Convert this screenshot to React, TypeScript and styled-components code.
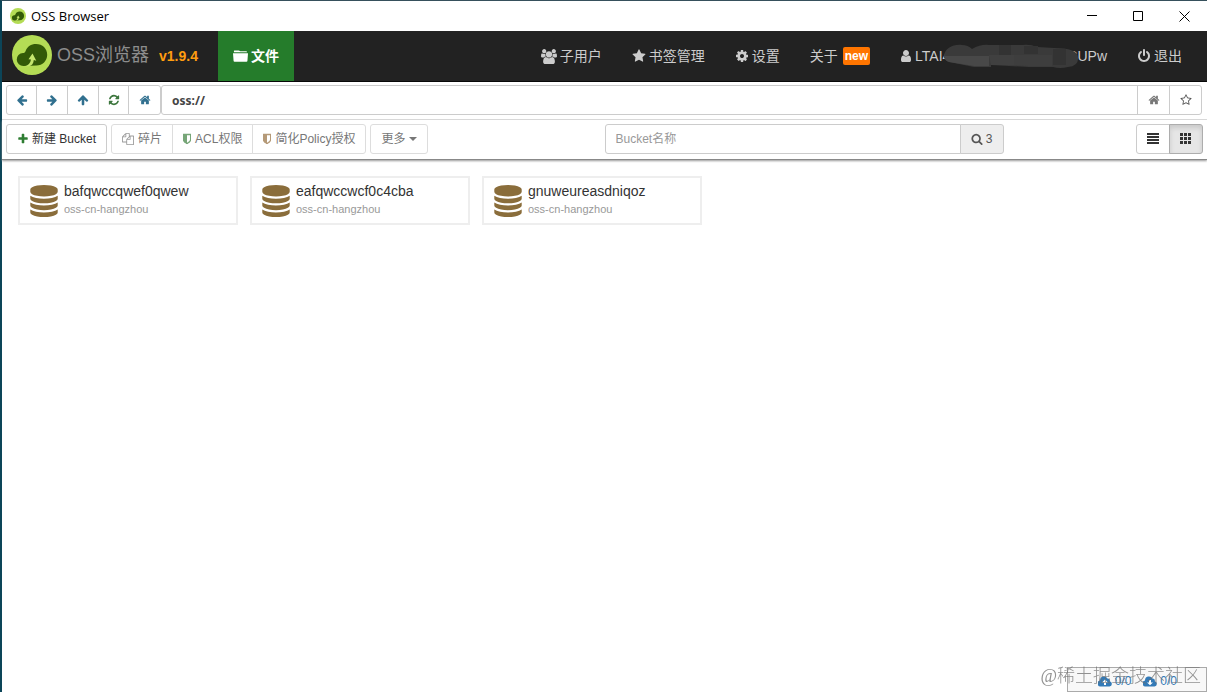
import React from "react";
import styled, { createGlobalStyle } from "styled-components";

const sans = '"Liberation Sans", "Noto Sans CJK SC", sans-serif';

const GlobalStyle = createGlobalStyle`
  * { box-sizing: border-box; }
  body {
    margin: 0;
    background: #fff;
    color: #333;
    font: 14px/20px ${sans};
  }
  a { color: inherit; text-decoration: none; }
  button, input { font-family: inherit; margin: 0; }
`;

/* ---------- icons ---------- */

const PATHS = {
  left: "M1664 896v128q0 53-32.5 90.5t-84.5 37.5h-704l293 294q38 36 38 90t-38 90l-75 76q-37 37-90 37-52 0-91-37l-651-652q-37-37-37-90 0-52 37-91l651-650q38-38 91-38 52 0 90 38l75 74q38 38 38 91t-38 91l-293 293h704q52 0 84.5 37.5t32.5 90.5z",
  right: "M1600 960q0 54-37 91l-651 651q-39 37-91 37-51 0-90-37l-75-75q-38-38-38-91t38-91l293-293h-704q-52 0-84.5-37.5t-32.5-90.5v-128q0-53 32.5-90.5t84.5-37.5h704l-293-294q-38-36-38-90t38-90l75-75q38-38 90-38 53 0 91 38l651 651q37 35 37 90z",
  up: "M1675 971q0 51-37 90l-75 75q-38 38-91 38-54 0-90-38l-294-293v704q0 52-37.5 84.5t-90.5 32.5h-128q-53 0-90.5-32.5t-37.5-84.5v-704l-294 293q-36 38-90 38t-90-38l-75-75q-38-38-38-90 0-53 38-91l651-651q35-37 90-37 54 0 91 37l651 651q37 39 37 91z",
  refresh: "M1639 1056q0 5-1 7-64 268-268 434.5t-478 166.5q-146 0-282.5-55t-243.5-157l-129 129q-19 19-45 19t-45-19-19-45v-448q0-26 19-45t45-19h448q26 0 45 19t19 45-19 45l-137 137q71 66 161 102t187 36q134 0 250-65t186-179q11-17 53-117 8-23 30-23h192q13 0 22.5 9.5t9.5 22.5zm25-800v448q0 26-19 45t-45 19h-448q-26 0-45-19t-19-45 19-45l138-138q-148-137-349-137-134 0-250 65t-186 179q-11 17-53 117-8 23-30 23h-199q-13 0-22.5-9.5t-9.5-22.5v-7q65-268 270-434.5t480-166.5q146 0 284 55.5t245 156.5l130-129q19-19 45-19t45 19 19 45z",
  home: "M1472 992v480q0 26-19 45t-45 19h-384v-384h-256v384h-384q-26 0-45-19t-19-45v-480q0-1 .5-3t.5-3l575-474 575 474q1 2 1 6zm223-69l-62 74q-8 9-21 11h-3q-13 0-21-7l-692-577-692 577q-12 8-24 7-13-2-21-11l-62-74q-8-10-7-23.5t11-21.5l719-599q32-26 76-26t76 26l244 204v-195q0-14 9-23t23-9h192q14 0 23 9t9 23v408l219 182q10 8 11 21.5t-7 23.5z",
  plus: "M1600 736v192q0 40-28 68t-68 28h-416v416q0 40-28 68t-68 28h-192q-40 0-68-28t-28-68v-416h-416q-40 0-68-28t-28-68v-192q0-40 28-68t68-28h416v-416q0-40 28-68t68-28h192q40 0 68 28t28 68v416h416q40 0 68 28t28 68z",
  star: "M1728 647q0 22-26 48l-363 354 86 500q1 7 1 20 0 21-10.5 35.5t-30.5 14.5q-19 0-40-12l-449-236-449 236q-22 12-40 12-21 0-31.5-14.5t-10.5-35.5q0-6 2-20l86-500-364-354q-25-27-25-48 0-37 56-46l502-73 225-455q19-41 49-41t49 41l225 455 502 73q56 9 56 46z",
  starO: "M1201 1004l306-297-422-62-189-382-189 382-422 62 306 297-73 421 378-199 377 199zm527-357q0 22-26 48l-363 354 86 500q1 7 1 20 0 50-41 50-19 0-40-12l-449-236-449 236q-22 12-40 12-21 0-31.5-14.5t-10.5-35.5q0-6 2-20l86-500-364-354q-25-27-25-48 0-37 56-46l502-73 225-455q19-41 49-41t49 41l225 455 502 73q56 9 56 46z",
  cog: "M1152 896q0-106-75-181t-181-75-181 75-75 181 75 181 181 75 181-75 75-181zm512-109v222q0 12-8 23t-20 13l-185 28q-19 54-39 91 35 50 107 138 10 12 10 25t-9 23q-27 37-99 108t-94 71q-12 0-26-9l-138-108q-44 23-91 38-16 136-29 186-7 28-36 28h-222q-14 0-24.5-8.5t-11.5-21.5l-28-184q-49-16-90-37l-141 107q-10 9-25 9-14 0-25-11-126-114-165-168-7-10-7-23 0-12 8-23 15-21 51-66.5t54-70.5q-27-50-41-99l-183-27q-13-2-21-12.5t-8-23.5v-222q0-12 8-23t19-13l186-28q14-46 39-92-40-57-107-138-10-12-10-24 0-10 9-23 26-36 98.5-107.5t94.5-71.5q13 0 26 10l138 107q44-23 91-38 16-136 29-186 7-28 36-28h222q14 0 24.5 8.5t11.5 21.5l28 184q49 16 90 37l142-107q9-9 24-9 13 0 25 10 129 119 165 170 7 8 7 22 0 12-8 23-15 21-51 66.5t-54 70.5q26 50 41 98l183 28q13 2 21 12.5t8 23.5z",
  user: "M1536 1399q0 109-62.5 187t-150.5 78h-854q-88 0-150.5-78t-62.5-187q0-85 8.5-160.5t31.5-152 58.5-131 94-89 134.5-34.5q131 128 313 128t313-128q76 0 134.500 34.500t94 89 58.500 131 31.500 152 8.500 160.500zm-256-887q0 159-112.500 271.500t-271.500 112.500-271.500-112.500-112.500-271.500 112.500-271.500 271.500-112.500 271.500 112.500 112.500 271.500z",
  power: "M1664 896q0 156-61 298t-164 245-245 164-298 61-298-61-245-164-164-245-61-298q0-182 80.5-343t226.5-270q43-32 95.5-25t83.5 50q32 42 24.5 94.5t-49.5 84.5q-98 74-151.5 181t-53.5 228q0 104 40.5 198.5t109.5 163.5 163.5 109.5 198.5 40.5 198.5-40.5 163.5-109.5 109.5-163.5 40.5-198.5q0-121-53.5-228t-151.5-181q-42-32-49.5-84.5t24.5-94.5q31-43 84-50t95 25q146 109 226.5 270t80.5 343zm-640-768v640q0 52-38 90t-90 38-90-38-38-90v-640q0-52 38-90t90-38 90 38 38 90z",
  search: "M1216 832q0-185-131.5-316.5t-316.5-131.5-316.5 131.5-131.5 316.5 131.5 316.5 316.5 131.5 316.5-131.5 131.5-316.5zm512 832q0 52-38 90t-90 38q-54 0-90-38l-343-342q-179 124-399 124-143 0-273.5-55.5t-225-150-150-225-55.5-273.5 55.5-273.5 150-225 225-150 273.5-55.5 273.5 55.5 225 150 150 225 55.5 273.5q0 220-124 399l343 343q37 37 37 90z",
  shield: "M1344 960v-640h-448v1137q119-63 213-137 235-184 235-360zm192-768v768q0 86-33.5 170.5t-83 150-118 127.5-126.5 103-121 77.5-89.5 49.5-42.5 20q-12 6-26 6t-26-6q-16-7-42.5-20t-89.5-49.5-121-77.5-126.5-103-118-127.5-83-150-33.5-170.5v-768q0-26 19-45t45-19h1152q26 0 45 19t19 45z",
  files: "M1696 384q40 0 68 28t28 68v1216q0 40-28 68t-68 28h-960q-40 0-68-28t-28-68v-288h-544q-40 0-68-28t-28-68v-672q0-40 20-88t48-76l408-408q28-28 76-48t88-20h416q40 0 68 28t28 68v328q68-40 128-40h416zm-544 213l-299 299h299v-299zm-640-384l-299 299h299v-299zm196 647l316-316v-416h-384v416q0 40-28 68t-68 28h-416v640h512v-256q0-40 20-88t48-76zm956 804v-1152h-384v416q0 40-28 68t-68 28h-416v640h896z",
  users: "M593 896q-162 5-265 128h-134q-82 0-138-40.5t-56-118.5q0-353 124-353 6 0 43.5 21t97.5 42.5 119 21.5q67 0 133-23-5 37-5 66 0 139 81 256zm1071 637q0 120-73 189.5t-194 69.5h-874q-121 0-194-69.5t-73-189.5q0-53 3.5-103.5t14-109 26.5-108.5 43-97.5 62-81 85.5-53.5 111.5-20q10 0 43 21.5t73 48 107 48 135 21.5 135-21.5 107-48 73-48 43-21.5q61 0 111.5 20t85.5 53.5 62 81 43 97.5 26.5 108.5 14 109 3.5 103.5zm-1024-1277q0 106-75 181t-181 75-181-75-75-181 75-181 181-75 181 75 75 181zm704 384q0 159-112.5 271.5t-271.5 112.5-271.5-112.5-112.5-271.5 112.5-271.5 271.5-112.5 271.5 112.5 112.5 271.5zm576 225q0 78-56 118.5t-138 40.5h-134q-103-123-265-128 81-117 81-256 0-29-5-66 66 23 133 23 59 0 119-21.5t97.5-42.5 43.5-21q124 0 124 353zm-128-609q0 106-75 181t-181 75-181-75-75-181 75-181 181-75 181 75 75 181z",
  database: "M896 768q237 0 443-43t325-127v170q0 69-103 128t-280 93.5-385 34.5-385-34.5-280-93.5-103-128v-170q119 84 325 127t443 43zm0 768q237 0 443-43t325-127v170q0 69-103 128t-280 93.5-385 34.5-385-34.5-280-93.5-103-128v-170q119 84 325 127t443 43zm0-384q237 0 443-43t325-127v170q0 69-103 128t-280 93.5-385 34.5-385-34.5-280-93.5-103-128v-170q119 84 325 127t443 43zm0-1152q208 0 385 34.5t280 93.5 103 128v128q0 69-103 128t-280 93.5-385 34.5-385-34.5-280-93.5-103-128v-128q0-69 103-128t280-93.5 385-34.5z",
};

const Svg = styled.svg`
  display: block;
  flex: none;
`;

function Icon({ name, size = 12, color = "currentColor", trim = 0 }: {
  name: keyof typeof PATHS; size?: number; color?: string; trim?: number;
}) {
  const full = name === "users" ? 1920 : 1792;
  const inset = (trim * 1792) / size;
  return (
    <Svg
      width={Math.round((size * full) / 1792) - trim * 2}
      height={size}
      viewBox={`${inset} 0 ${full - inset * 2} 1792`}
      fill={color}
      aria-hidden="true"
    >
      <path d={PATHS[name]} />
    </Svg>
  );
}

const Logo = ({ size }: { size: number }) => (
  <Svg width={size} height={size} viewBox="0 0 40 40" aria-hidden="true">
    <circle cx="20" cy="20" r="20" fill="#b4dc55" />
    <path d="M11.500 31a6.500 6.500 0 0 1-.5-13c1.300 0 2.200-.9 2.700-2.300C15.300 11.700 19 9 24 9c6.500 0 11.200 4.700 11.200 10.800S30.500 30.500 24.500 30.500z" fill="#335a08" />
    <path d="M20.500 18.500l3.800 7.200-2.500-.8c-.2 3.200-1.900 5.700-4.800 6.400h-4.500c3.700-.7 6-3.300 6.500-6.800l-2.500-.3z" fill="#c5e66e" />
  </Svg>
);

const FolderIcon = () => (
  <Svg width="15" height="14" viewBox="0 0 16 14" fill="#fff" aria-hidden="true">
    <path d="M1 3V1.500Q1 1 1.500 1H6q1 0 1.300.7L7.700 2H14q1 0 1 1zM0 4h16l-.6 8q-.1 1-1 1H1.600q-.9 0-1-1z" />
  </Svg>
);

const CloudIcon = ({ down }: { down?: boolean }) => (
  <Svg width="14" height="12" viewBox="0 0 14 12" aria-hidden="true">
    <path d="M3.200 11.500A3 3 0 0 1 2 5.500 4 4 0 0 1 9.500 3.500a2.300 2.300 0 0 1 2.300 2.700A2.700 2.700 0 0 1 11.500 11.500z" fill="#337ab7" />
    <path d={down ? "M6 5h2v2.500h2L7 10.300 4 7.500h2z" : "M7 4.500l3 3H8V10H6V7.500H4z"} fill="#fff" />
  </Svg>
);

/* ---------- window frame ---------- */

const Window = styled.div`
  min-height: 100vh;
  display: flex;
  flex-direction: column;
  border-top: 1px solid #36505c;
  border-left: 2px solid #0c4558;
`;

const TitleBar = styled.header`
  display: flex;
  align-items: center;
  height: 30px;
  padding-left: 8px;
  gap: 5px;
  font: 13px/16px "Open Sans", "Noto Sans CJK SC", sans-serif;
  color: #000;
`;

const WindowControls = styled.div`
  display: flex;
  margin-left: auto;
`;

const WindowButton = styled.button`
  width: 46px;
  height: 30px;
  padding: 0;
  border: 0;
  background: none;
  display: grid;
  place-items: center;
`;

/* ---------- main navigation ---------- */

const NavBar = styled.nav`
  display: flex;
  align-items: flex-start;
  height: 51px;
  padding: 0 10px;
  background: #222;
  color: #ccc;
  border-bottom: 1px solid #080808;
  white-space: nowrap;
`;

const Brand = styled.a`
  display: flex;
  align-items: center;
  gap: 5px;
  height: 48px;
  color: #8d8d8d;
  font-size: 18px;
`;

const Version = styled.span`
  margin: 0 20px 0 10px;
  line-height: 50px;
  font-weight: bold;
  color: #ff9d10;
`;

const NavLink = styled.a<{ $active?: boolean; $gap?: number }>`
  display: flex;
  align-items: center;
  gap: ${(p) => p.$gap ?? 3}px;
  height: 50px;
  padding: 0 15px;
  ${(p) => p.$active && "background: #257c2b; color: #fff; font-weight: bold;"}
`;

const NavRight = styled.div`
  display: flex;
  margin-left: auto;
`;

const NewBadge = styled.span`
  padding: 0 2px;
  border-radius: 2px;
  background: #ff7500;
  color: #fff;
  font-size: 12px;
  line-height: 18px;
  font-weight: bold;
`;

const Account = styled.span`
  display: flex;
  align-items: center;
`;

const Smudge = styled(Svg)`
  position: relative;
  margin: 0 -14px 0 -9px;
`;

const AccountMask = () => (
  <Smudge width="140" height="26" viewBox="0 0 140 26" aria-hidden="true">
    <path d="M3 13C4 5 12 1 21 2q6 0 10 4 9-5 17-4h33q8-1 15 2l17 1q23 0 24 9t-10 10q-8 2-15 0H88l-38-2v2H33L8 19q-5-2-5-6z" fill="#3a3a3a" />
    <path d="M3 13h45v10H33L8 19q-5-2-5-6z" fill="#484848" />
    <path d="M48 12h25v10H50z" fill="#404040" />
    <path d="M58 2h12v10H58zM83 3h14v8H83zM112 6h13v16h-13z" fill="#333" />
    <path d="M73 12h38v11H88l-15-1z" fill="#3e3e3e" />
  </Smudge>
);

/* ---------- toolbars ---------- */

const AddressBar = styled.div`
  display: flex;
  padding: 3px 5px 4px 4px;
  border-bottom: 1px solid #ddd;
`;

const Group = styled.div`
  display: flex;
  > * + * { margin-left: -1px; }
  > :not(:first-child) { border-top-left-radius: 0; border-bottom-left-radius: 0; }
  > :not(:last-child) { border-top-right-radius: 0; border-bottom-right-radius: 0; }
`;

const Button = styled.button<{ $width?: number; $muted?: boolean; $active?: boolean }>`
  display: flex;
  align-items: center;
  justify-content: center;
  gap: ${(p) => (p.$muted ? 4 : 3)}px;
  flex: none;
  height: 30px;
  ${(p) => p.$width && `width: ${p.$width}px;`}
  padding: 0 ${(p) => (p.$width ? 0 : 10)}px;
  border: 1px solid ${(p) => (p.$active ? "#adadad" : p.$muted ? "#ddd" : "#ccc")};
  border-radius: 3px;
  background: ${(p) => (p.$active ? "#e6e6e6" : "#fff")};
  ${(p) => p.$active && "box-shadow: inset 0 3px 5px rgba(0, 0, 0, 0.125);"}
  color: ${(p) => (p.$muted ? "#777" : "#333")};
  font-size: 12px;
  line-height: 18px;
  white-space: nowrap;
`;

const Field = styled.input<{ $address?: boolean }>`
  flex: 1;
  min-width: 0;
  height: 30px;
  padding: 0 10px;
  border: 1px solid #ccc;
  border-radius: 3px;
  background: #fff;
  color: #444;
  font-size: 12px;
  outline: 0;
  ${(p) => p.$address && 'font: bold 12px/18px "Noto Sans", "Noto Sans CJK SC", sans-serif;'}
  &::placeholder { color: #999; opacity: 1; }
`;

const AddressGroup = styled(Group)`
  flex: 1;
`;

const ActionBar = styled.div`
  display: flex;
  padding: 4px 0 5px;
  border-bottom: 1px solid #888;
  box-shadow: 0 1px 2px #999;
`;

const Half = styled.div`
  flex: 1 1 50%;
  display: flex;
  gap: 4px;
  &:first-child { padding-left: 4px; }
  &:last-child { padding-right: 4px; justify-content: space-between; }
`;

const SearchGroup = styled(Group)`
  flex: 0 1 399px;
`;

const SearchButton = styled(Button)`
  background: #eee;
  color: #555;
`;

const Caret = styled.i`
  border: 4px solid transparent;
  border-top-color: #777;
  border-bottom: 0;
`;

/* ---------- bucket list ---------- */

const Buckets = styled.main`
  display: flex;
  flex-wrap: wrap;
  gap: 12px;
  padding: 16px;
`;

const BucketCard = styled.a`
  display: flex;
  align-items: center;
  gap: 4px;
  width: 220px;
  height: 49px;
  padding-left: 8px;
  border: 2px solid #eee;
`;

const BucketText = styled.div`
  display: flex;
  flex-direction: column;
  margin-top: -3px;
`;

const Region = styled.small`
  font-size: 11px;
  line-height: 16px;
  color: #999;
`;

/* ---------- transfer status ---------- */

const TransferBox = styled.aside`
  position: fixed;
  right: 0;
  bottom: 0;
  display: flex;
  justify-content: flex-end;
  gap: 12px;
  width: 140px;
  height: 25px;
  padding: 4px 29px 0 0;
  border: 1px solid #aaa;
  background: #f8f8f8;
`;

const Transfer = styled.a`
  display: flex;
  align-items: center;
  gap: 3px;
  height: 18px;
  color: #337ab7;
  font-size: 12px;
`;

const Watermark = styled.div`
  position: fixed;
  right: 6px;
  bottom: 4px;
  color: rgba(110, 110, 110, 0.75);
  font: 300 18px/24px "Liberation Serif", "Noto Sans CJK SC", serif;
  white-space: nowrap;
  pointer-events: none;
`;

const buckets = ["bafqwccqwef0qwew", "eafqwccwcf0c4cba", "gnuweureasdniqoz"];

export default function App() {
  return (
    <Window>
      <GlobalStyle />
      <TitleBar>
        <Logo size={16} />
        <span>OSS Browser</span>
        <WindowControls>
          <WindowButton aria-label="Minimize">
            <Svg width="10" height="10"><path d="M0 4.500h10" stroke="#000" /></Svg>
          </WindowButton>
          <WindowButton aria-label="Maximize">
            <Svg width="10" height="10"><path d="M.5.5h9v9h-9z" fill="none" stroke="#000" /></Svg>
          </WindowButton>
          <WindowButton aria-label="Close">
            <Svg width="11" height="11"><path d="M.5.5l10 10m0-10l-10 10" stroke="#000" /></Svg>
          </WindowButton>
        </WindowControls>
      </TitleBar>

      <NavBar>
        <Brand href="#"><Logo size={40} /><span>OSS浏览器</span></Brand>
        <Version>v1.9.4</Version>
        <NavLink href="#files" $active><FolderIcon />文件</NavLink>
        <NavRight>
          <NavLink href="#users"><Icon name="users" size={15} />子用户</NavLink>
          <NavLink href="#bookmarks"><Icon name="star" size={14} />书签管理</NavLink>
          <NavLink href="#settings"><Icon name="cog" size={14} />设置</NavLink>
          <NavLink href="#about" $gap={5}>关于<NewBadge>new</NewBadge></NavLink>
          <NavLink href="#account">
            <Icon name="user" size={14} trim={1} />
            <Account><span>LTAI4</span><AccountMask /><span>CUPw</span></Account>
          </NavLink>
          <NavLink href="#logout"><Icon name="power" size={14} />退出</NavLink>
        </NavRight>
      </NavBar>

      <AddressBar>
        <Group>
          <Button $width={31} aria-label="Back"><Icon name="left" color="#31708f" /></Button>
          <Button $width={32} aria-label="Forward"><Icon name="right" color="#31708f" /></Button>
          <Button $width={32} aria-label="Up"><Icon name="up" color="#31708f" /></Button>
          <Button $width={31} aria-label="Refresh"><Icon name="refresh" color="#3c763d" /></Button>
          <Button $width={33} aria-label="Home"><Icon name="home" color="#31708f" /></Button>
        </Group>
        <AddressGroup>
          <Field $address aria-label="Address" defaultValue="oss://" />
          <Button $width={33} aria-label="Save as home"><Icon name="home" color="#777" /></Button>
          <Button $width={33} aria-label="Bookmark"><Icon name="starO" color="#555" /></Button>
        </AddressGroup>
      </AddressBar>

      <ActionBar>
        <Half>
          <Button><Icon name="plus" color="#2e7d32" />新建 Bucket</Button>
          <Group>
            <Button $muted><Icon name="files" color="#999" />碎片</Button>
            <Button $muted><Icon name="shield" color="#77a678" trim={2} />ACL权限</Button>
            <Button $muted><Icon name="shield" color="#b59a78" trim={2} />简化Policy授权</Button>
          </Group>
          <Button $muted>更多<Caret /></Button>
        </Half>
        <Half>
          <SearchGroup>
            <Field aria-label="Bucket名称" placeholder="Bucket名称" />
            <SearchButton $width={44}><Icon name="search" />3</SearchButton>
          </SearchGroup>
          <Group>
            <Button $width={34} aria-label="List view">
              <Svg width="12" height="12" fill="#333"><path d="M0 0h12v2H0zM0 3h12v2H0zM0 6h12v2H0zM0 9h12v2H0z" /></Svg>
            </Button>
            <Button $width={34} $active aria-label="Grid view">
              <Svg width="12" height="12" fill="#333"><path d="M0 0h3v3H0zM4 0h3v3H4zM8 0h3v3H8zM0 4h3v3H0zM4 4h3v3H4zM8 4h3v3H8zM0 8h3v3H0zM4 8h3v3H4zM8 8h3v3H8z" /></Svg>
            </Button>
          </Group>
        </Half>
      </ActionBar>

      <Buckets>
        {buckets.map((name) => (
          <BucketCard key={name} href={`#${name}`}>
            <Icon name="database" size={32} color="#8a6d3b" />
            <BucketText>
              <span>{name}</span>
              <Region>oss-cn-hangzhou</Region>
            </BucketText>
          </BucketCard>
        ))}
      </Buckets>

      <TransferBox>
        <Transfer href="#uploads"><CloudIcon />0/0</Transfer>
        <Transfer href="#downloads"><CloudIcon down />0/0</Transfer>
      </TransferBox>
      <Watermark>@稀土掘金技术社区</Watermark>
    </Window>
  );
}
